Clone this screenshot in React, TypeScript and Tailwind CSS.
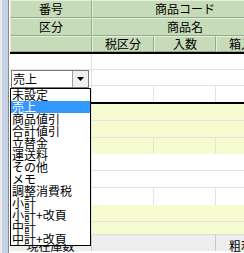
import { ReactNode } from "react";

const ITEMS = [
  "未設定",
  "売上",
  "商品値引",
  "合計値引",
  "立替金",
  "運送料",
  "その他",
  "メモ",
  "調整消費税",
  "小計",
  "小計+改頁",
  "中計",
  "中計+改頁",
];

const FONT = "font-['Noto_Sans_CJK_JP','Noto_Sans',sans-serif]";

function HCell({ children, className = "" }: { children?: ReactNode; className?: string }) {
  return (
    <div
      className={`flex items-center justify-center overflow-hidden whitespace-nowrap bg-[#c6dbb7] border border-t-[#e4eedc] border-l-[#e4eedc] border-b-[#97a98e] border-r-[#97a98e] text-[12px] leading-none ${className}`}
    >
      {children}
    </div>
  );
}

// one record = 3 lines, matching the 3 header rows
function Record({ bg, h, children }: { bg: string; h: [number, number, number]; children?: ReactNode }) {
  return (
    <div className={`flex flex-col ${bg}`}>
      <div className="flex border-b border-[#e3e3e3]" style={{ height: h[0] }}>
        <div className="w-[82px] border-r border-[#e3e3e3]" />
        <div className="flex-1" />
      </div>
      <div className="flex border-b border-[#e3e3e3]" style={{ height: h[1] }}>
        <div className="w-[82px] border-r border-[#e3e3e3] relative">{children}</div>
        <div className="flex-1" />
      </div>
      <div className="flex" style={{ height: h[2] }}>
        <div className="w-[82px] border-r border-[#e3e3e3]" />
        <div className="w-[62px] border-r border-[#e3e3e3]" />
        <div className="w-[62px] border-r border-[#e3e3e3]" />
        <div className="flex-1" />
      </div>
    </div>
  );
}

function Combo() {
  return (
    <div className="absolute left-[1px] top-0 w-[78px] h-[18px] flex bg-white border border-[#7a7a7a] z-10">
      <span className="flex-1 pl-[1px] text-[12px] leading-[16px]">売上</span>
      <div className="w-[16px] h-[16px] flex items-center justify-center bg-[#f0f0f0] border-l border-[#a0a0a0]">
        <svg width="7" height="4" viewBox="0 0 7 4">
          <path d="M0 0h7L3.5 4z" fill="#000" />
        </svg>
      </div>
    </div>
  );
}

function DropList() {
  return (
    <ul className="absolute left-[10px] top-[88px] w-[81px] bg-white border border-black z-20">
      {ITEMS.map((it) => (
        <li
          key={it}
          className={`h-[12px] pl-[1px] text-[12px] leading-[12px] whitespace-nowrap ${
            it === "売上" ? "bg-[#3399ff] text-white" : "text-black"
          }`}
        >
          {it}
        </li>
      ))}
    </ul>
  );
}

export default function App() {
  return (
    <div className={`relative w-[244px] h-[253px] overflow-hidden flex bg-white text-black ${FONT}`}>
      <div className="flex shrink-0">
        <div className="w-[2px] bg-[#ececec]" />
        <div className="w-[6px] bg-[#c6d2e6]" />
        <div className="w-[1px] bg-[#8a8a8a]" />
        <div className="w-[1px] bg-white" />
      </div>
      <div className="flex flex-col w-[268px] shrink-0">
        <div className="grid grid-cols-[82px_62px_62px_62px] grid-rows-[18px_18px_16px]">
          <HCell>番号</HCell>
          <HCell className="col-span-3">商品コード</HCell>
          <HCell>区分</HCell>
          <HCell className="col-span-3">商品名</HCell>
          <HCell />
          <HCell>税区分</HCell>
          <HCell>入数</HCell>
          <HCell>箱入数</HCell>
        </div>
        <div className="h-[182px] overflow-hidden flex flex-col">
          <div className="border-t-2 border-b-2 border-black">
            <Record bg="bg-white" h={[16, 16, 16]}>
              <Combo />
            </Record>
          </div>
          <Record bg="bg-[#f6fcd0]" h={[17, 17, 16]} />
          <Record bg="bg-white" h={[17, 17, 17]} />
          <Record bg="bg-[#f6fcd0]" h={[17, 17, 17]} />
        </div>
        <div className="h-[17px] flex bg-[#eeeeee] border-t border-[#dcdcdc] text-[12px] leading-[12px]">
          <div className="w-[82px] pt-[5px] text-center border-r border-[#c8c8c8]">現在庫数</div>
          <div className="w-[124px] border-r border-[#c8c8c8]" />
          <div className="flex-1 pt-[5px] text-center">粗利率</div>
        </div>
      </div>
      <DropList />
    </div>
  );
}
